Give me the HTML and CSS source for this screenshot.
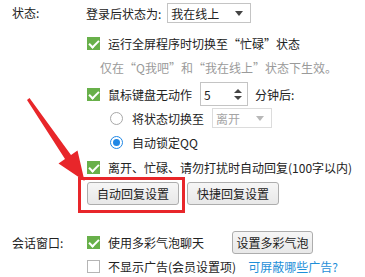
FILE: index.html
```html
<!DOCTYPE html>
<html lang="zh-CN">
<head>
    <meta charset="UTF-8">
    <title>状态设置</title>
    <link rel="stylesheet" href="styles.css">
</head>
<body>
    <div class="panel">
        <div class="section">
            <div class="label">状态:</div>
            <div class="body">
                <div class="row r1">
                    登录后状态为:
                    <span class="select">我在线上<span class="caret"></span></span>
                </div>
                <div class="row r2"><span class="cb on"></span>运行全屏程序时切换至“忙碌”状态</div>
                <div class="hint">仅在“Q我吧”和“我在线上”状态下生效。</div>
                <div class="row r4">
                    <span class="cb on"></span>鼠标键盘无动作
                    <span class="spin">5<span class="arrows"><i class="up"></i><i class="down"></i></span></span>
                    分钟后:
                </div>
                <div class="row sub r5">
                    <span class="radio"></span>将状态切换至
                    <span class="select off">离开<span class="caret"></span></span>
                </div>
                <div class="row sub r6"><span class="radio on"></span>自动锁定QQ</div>
                <div class="row r7"><span class="cb on"></span>离开、忙碌、请勿打扰时自动回复(100字以内)</div>
                <div class="btns">
                    <span class="mark"><button>自动回复设置</button></span>
                    <button>快捷回复设置</button>
                </div>
            </div>
        </div>

        <div class="section s2">
            <div class="label">会话窗口:</div>
            <div class="body">
                <div class="row r9"><span class="cb on"></span>使用多彩气泡聊天<button class="bubble">设置多彩气泡</button></div>
                <div class="row r10"><span class="cb"></span>不显示广告(会员设置项)<a class="link" href="#">可屏蔽哪些广告?</a></div>
            </div>
        </div>
    </div>

    <svg class="arrow" width="365" height="277" viewBox="0 0 365 277">
        <polygon points="27,100 29.5,98 71,155 77.5,150.5 84.5,181 58.5,163.5 65,159" fill="#e8262a"/>
    </svg>
</body>
</html>
```

FILE: styles.css
```css
* {
    margin: 0;
    padding: 0;
    box-sizing: border-box;
}

body {
    background: #fff;
    color: #222;
    font-family: "Noto Sans CJK SC", "Noto Sans", sans-serif;
    font-size: 12px;
    width: 365px;
    height: 277px;
    overflow: hidden;
    position: relative;
}

.panel {
    padding: 3px 0 0 12px;
}

.section {
    display: flex;
}

.label {
    width: 74px;
    height: 20px;
    line-height: 20px;
}

.body {
    display: flex;
    flex-direction: column;
}

.row {
    display: flex;
    align-items: center;
    height: 20px;
    white-space: nowrap;
}

.r2 { margin-top: 10px; }
.r4 { margin-top: 6px; height: 24px; }
.r5 { margin-top: 2px; }
.r6 { margin-top: 4px; }
.r7 { margin-top: 5px; }

.sub {
    padding-left: 24px;
}

.hint {
    margin-top: 7px;
    height: 16px;
    line-height: 16px;
    padding-left: 14px;
    color: #9a9a9a;
}

/* checkbox */
.cb {
    position: relative;
    width: 13px;
    height: 13px;
    margin: 0 8px 0 1px;
    border: 1px solid #b5b5b5;
    background: #fff;
    flex-shrink: 0;
}

.cb.on {
    background: #68b04a;
    border-color: #68b04a;
}

.cb.on::after {
    content: '';
    position: absolute;
    left: 3px;
    top: 0px;
    width: 4px;
    height: 8px;
    border: solid #fff;
    border-width: 0 2px 2px 0;
    transform: rotate(45deg);
}

/* radio */
.radio {
    position: relative;
    width: 13px;
    height: 13px;
    margin-right: 9px;
    border: 1px solid #a8a8a8;
    border-radius: 50%;
    background: #fff;
    flex-shrink: 0;
}

.radio.on {
    border-color: #1f87e5;
}

.radio.on::after {
    content: '';
    position: absolute;
    left: 2px;
    top: 2px;
    width: 7px;
    height: 7px;
    border-radius: 50%;
    background: #1f87e5;
}

/* dropdowns */
.select {
    display: flex;
    align-items: center;
    justify-content: space-between;
    width: 84px;
    height: 20px;
    margin-left: 6px;
    padding: 0 7px 0 3px;
    border: 1px solid #c4c4c4;
    background: #fff;
}

.caret {
    width: 0;
    height: 0;
    border-left: 4px solid transparent;
    border-right: 4px solid transparent;
    border-top: 5px solid #444;
}

.select.off {
    width: 60px;
    margin-left: 8px;
    color: #a5a5a5;
    border-color: #dcdcdc;
}

.select.off .caret {
    border-top-color: #b8b8b8;
}

/* spinner */
.spin {
    display: flex;
    align-items: center;
    justify-content: space-between;
    width: 48px;
    height: 24px;
    margin: 0 7px 0 8px;
    padding: 0 5px 0 3px;
    border: 1px solid #c4c4c4;
}

.arrows {
    display: flex;
    flex-direction: column;
    gap: 3px;
}

.arrows i {
    width: 0;
    height: 0;
    border-left: 4px solid transparent;
    border-right: 4px solid transparent;
}

.arrows .up {
    border-bottom: 4px solid #444;
}

.arrows .down {
    border-top: 4px solid #444;
}

/* buttons */
.btns {
    display: flex;
    gap: 8px;
    margin-top: 5px;
    padding-left: 1px;
}

button {
    height: 23px;
    padding: 0 9px;
    border: 1px solid #adadad;
    border-radius: 3px;
    background: linear-gradient(#f6f6f6, #e8e8e8);
    color: #222;
    font-family: inherit;
    font-size: 12px;
}

.mark {
    position: relative;
    display: flex;
}

.mark::after {
    content: '';
    position: absolute;
    left: -9px;
    top: -5px;
    right: -6px;
    bottom: -8px;
    border: 3px solid #e8262a;
}

.s2 {
    margin-top: 26px;
}

.s2 .label {
    height: 23px;
    line-height: 23px;
}

.r9 {
    height: 23px;
}

.bubble {
    width: 81px;
    margin-left: 28px;
    padding: 0;
}

.r10 {
    margin-top: 2px;
}

.link {
    margin-left: 12px;
    color: #1e8fd8;
    text-decoration: none;
}

.arrow {
    position: absolute;
    left: 0;
    top: 0;
    pointer-events: none;
}
```
